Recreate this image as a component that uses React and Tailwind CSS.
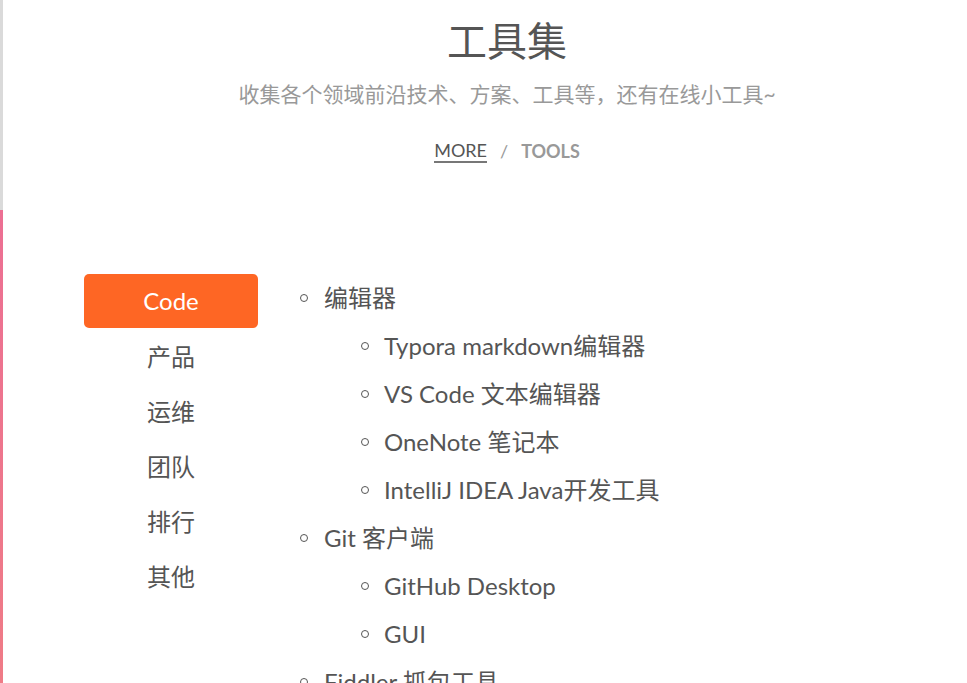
import React from 'react';

const fontStack = {fontFamily: 'Lato, "Noto Sans CJK SC", sans-serif'};

const categories = ['Code', '产品', '运维', '团队', '排行', '其他'];

const tools = [
    {name: '编辑器', children: ['Typora markdown编辑器', 'VS Code 文本编辑器', 'OneNote 笔记本', 'IntelliJ IDEA Java开发工具']},
    {name: 'Git 客户端', children: ['GitHub Desktop', 'GUI']},
    {name: 'Fiddler 抓包工具', children: []},
];

// 空心圆点，代替 list-style: circle
const Bullet = () => (
    <span className="inline-block w-[8px] h-[8px] rounded-full border border-[#555] shrink-0"/>
);

const ToolRow = ({text, nested}) => (
    <li className={`flex items-center h-[48px] ${nested ? 'pl-[65px]' : 'pl-[4px]'}`}>
        <Bullet/>
        <span className={nested ? 'ml-[15px]' : 'ml-[16px]'}>{text}</span>
    </li>
);

export default function App() {
    return (
        <div className="relative min-h-[683px] bg-white text-[#555] overflow-hidden" style={fontStack}>
            {/* 左侧滚动条 + 阅读进度 */}
            <div className="absolute left-0 top-0 w-[3px] h-[210px] bg-[#dadada]"/>
            <div className="absolute left-0 top-[210px] w-[3px] h-[473px] bg-gradient-to-b from-[#ec6f93] to-[#ef7b86]"/>

            <header className="ml-[47px] w-[920px] flex flex-col items-center pt-[15px]">
                <h1 className="text-[40px] leading-[52px] text-[#555]">工具集</h1>
                <p className="mt-[13px] text-[21px] leading-[28px] text-[#999]">收集各个领域前沿技术、方案、工具等，还有在线小工具~</p>
                <nav className="mt-[31px] flex items-center text-[18px] leading-[24px]">
                    <span className="text-[#555] border-b-2 border-[#777] leading-[22px]">MORE</span>
                    <span className="mx-[13px] text-[#999]">/</span>
                    <span className="font-bold text-[#999]">TOOLS</span>
                </nav>
            </header>

            <main className="flex mt-[111px] pl-[84px]">
                <aside className="w-[174px] shrink-0 flex flex-col">
                    {categories.map((c, i) => (
                        <div
                            key={c}
                            className={i === 0
                                ? 'h-[54px] mb-[1px] flex items-center justify-center rounded-[5px] bg-[#fe6624] text-white text-[24px]'
                                : 'h-[55px] flex items-center justify-center text-[24px] text-[#555]'}
                        >
                            {c}
                        </div>
                    ))}
                </aside>
                <ul className="ml-[38px] text-[24px] text-[#555]">
                    {tools.map(t => (
                        <React.Fragment key={t.name}>
                            <ToolRow text={t.name}/>
                            {t.children.map(c => <ToolRow key={c} text={c} nested/>)}
                        </React.Fragment>
                    ))}
                </ul>
            </main>
        </div>
    );
}
